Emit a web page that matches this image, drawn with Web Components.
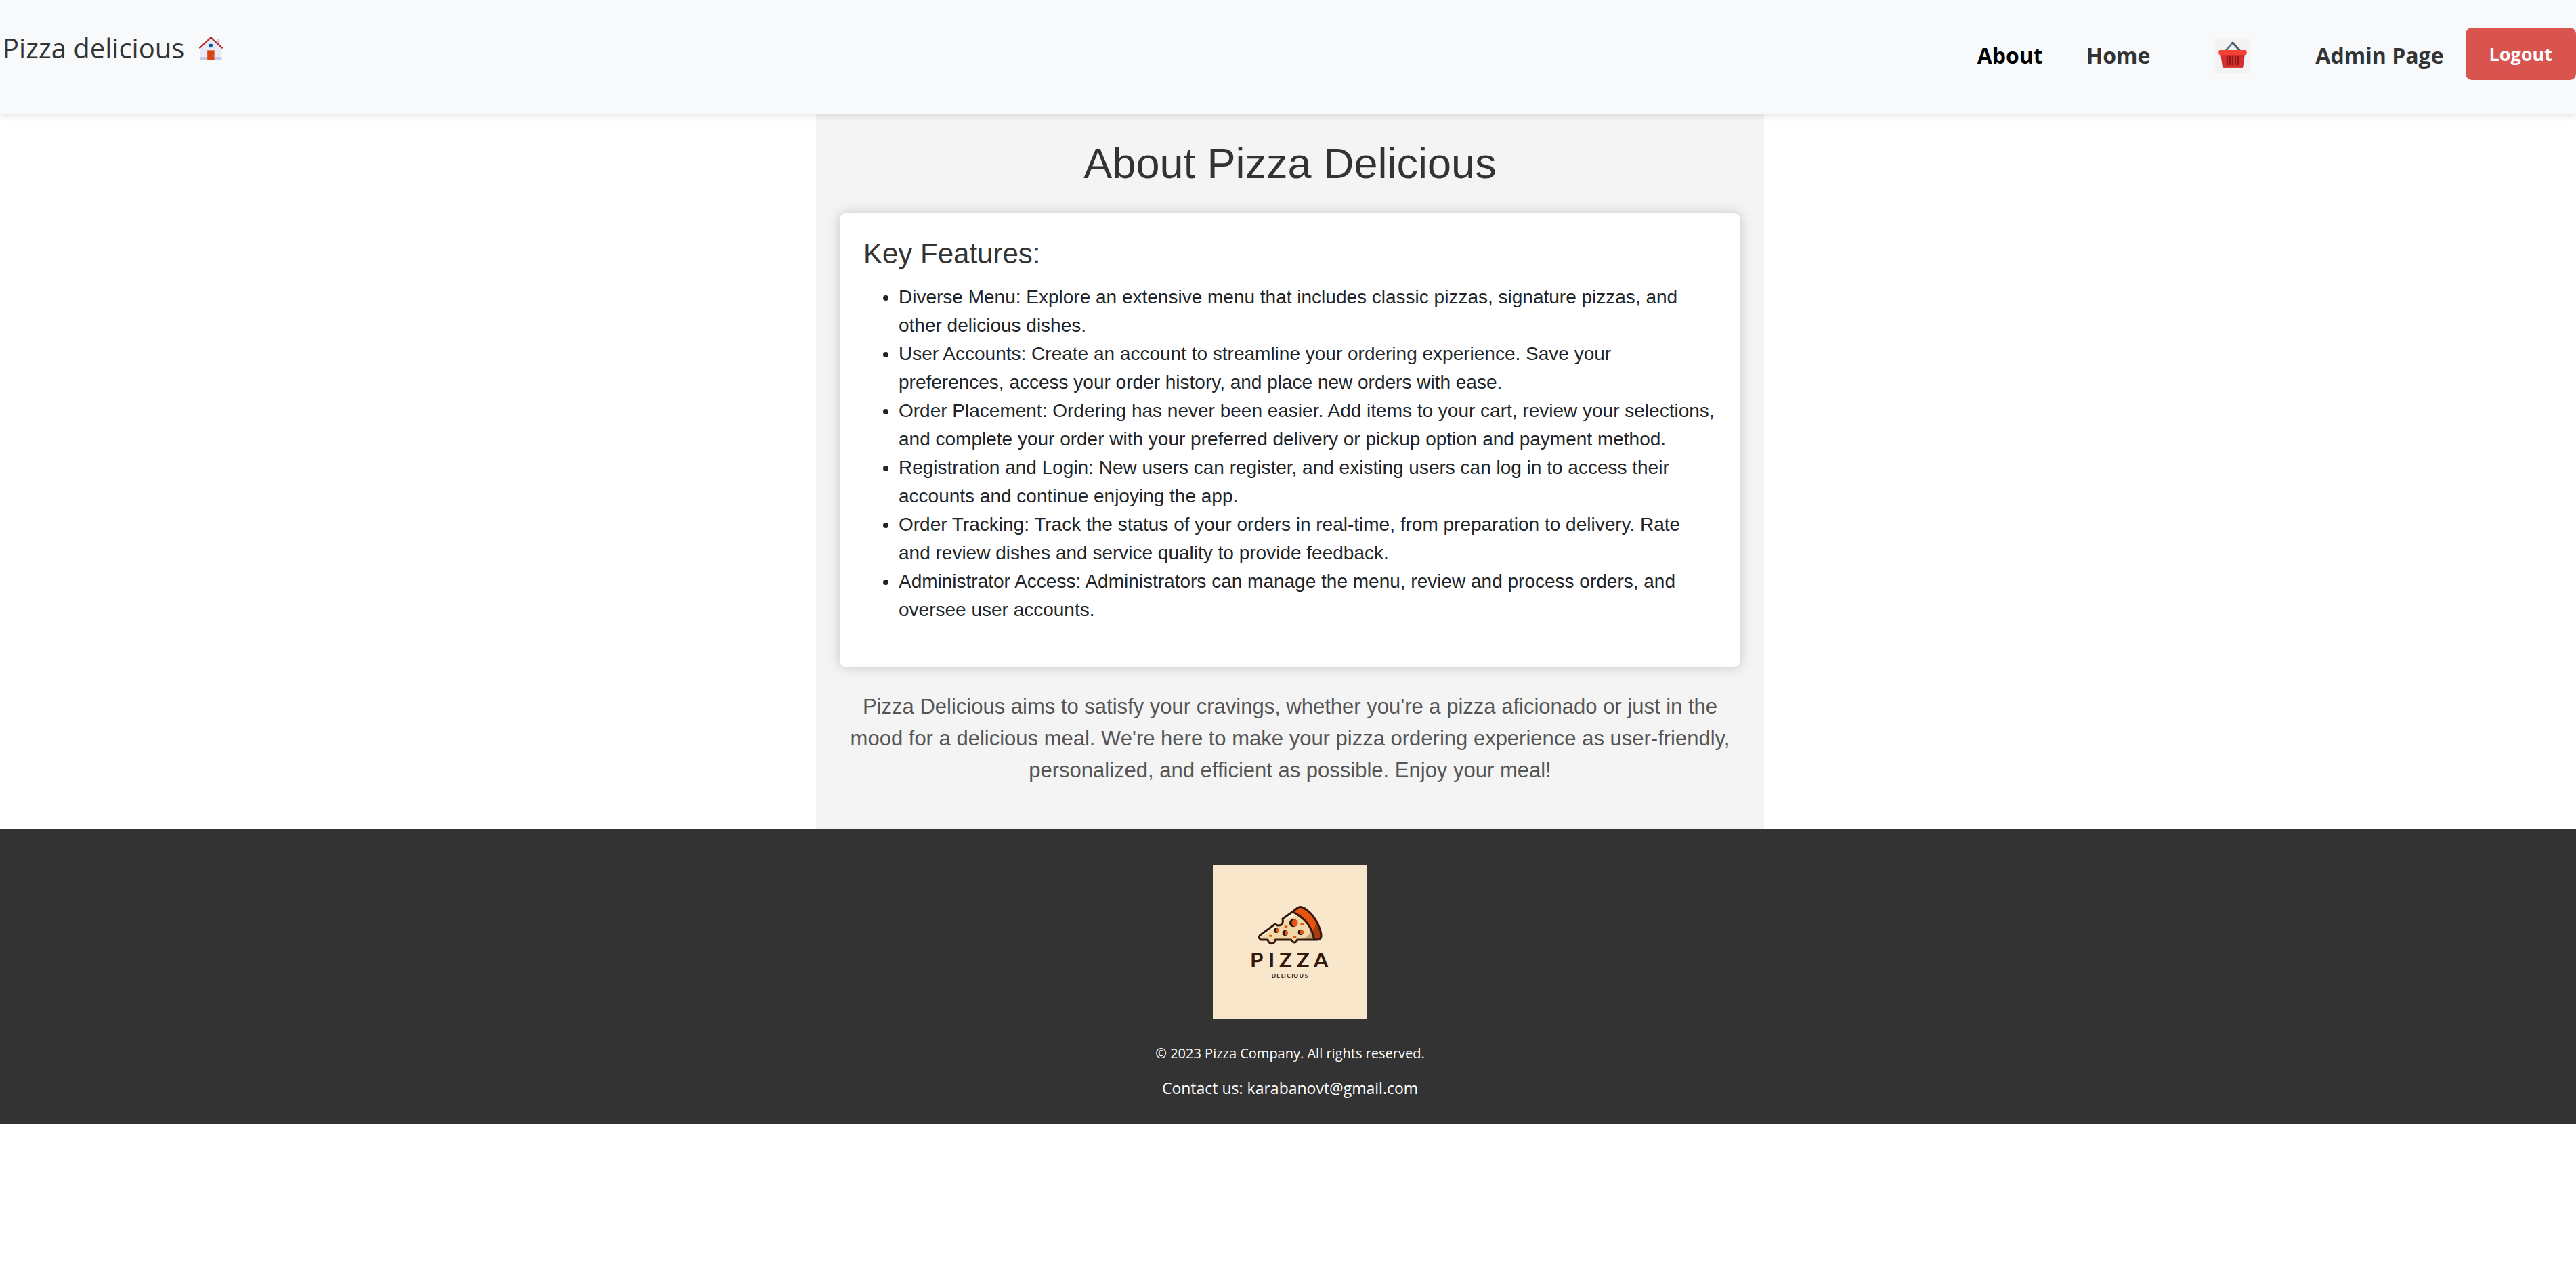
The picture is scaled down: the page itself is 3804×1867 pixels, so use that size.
<!DOCTYPE html>
<html lang="en">
<head>
<meta charset="utf-8">
<title>About Pizza Delicious</title>
<style>
  html { overflow-x: clip; }
  body { margin: 0; background: #fff; color: #212529; font-family: "Open Sans", "Noto Sans", sans-serif; }
</style>
</head>
<body>
<site-header>
  <nav-link href="#about" current>About</nav-link>
  <nav-link href="#home">Home</nav-link>
  <nav-link href="#basket" label="Basket" wide><basket-icon></basket-icon></nav-link>
  <nav-link href="#admin">Admin Page</nav-link>
</site-header>
<about-page>
  <span slot="title">About Pizza Delicious</span>
  <feature-card></feature-card>
  <span slot="summary">Pizza Delicious aims to satisfy your cravings, whether you're a pizza aficionado or just in the mood for a delicious meal. We're here to make your pizza ordering experience as user-friendly, personalized, and efficient as possible. Enjoy your meal!</span>
</about-page>
<site-footer></site-footer>

<script>
const define = (name, html) => customElements.define(name, class extends HTMLElement {
  constructor() {
    super();
    this.attachShadow({ mode: "open" }).innerHTML = html;
  }
});

define("house-icon", `
  <style>:host { display: block; width: 35px; height: 35px; } svg { display: block; width: 100%; height: 100%; }</style>
  <svg viewBox="41 42 105 105" aria-hidden="true">
    <path fill="#c5cae9" d="M120 54h12v32h-12z"/>
    <path fill="#e8eaf6" d="M93 46 45 91v56h96V91z"/>
    <path fill="#c5cae9" d="M45 132h96v15H45z"/>
    <path fill="#bbdefb" d="M83 72h20v21H83z"/>
    <path fill="#01579b" d="M86 75h14v15H86z"/>
    <path fill="#e8a08c" d="M75 102h36v45H75z"/>
    <path fill="#d84315" d="M78 104h30v41H78z"/>
    <path fill="#ef7043" d="M99 123h6v8h-6z"/>
    <path fill="none" stroke="#b71c1c" stroke-width="6" stroke-linecap="round" stroke-linejoin="round" d="M44 92 93 46l50 46"/>
  </svg>`);

define("basket-icon", `
  <style>:host { display: block; width: 52px; height: 52px; } svg { display: block; width: 100%; height: 100%; }</style>
  <svg viewBox="96 48 156 156" aria-hidden="true">
    <path fill="#f3f3f3" d="M96 48h156v156H96z"/>
    <path fill="none" stroke="#607d8b" stroke-width="9" d="M143 106 174 69"/>
    <path fill="none" stroke="#455a64" stroke-width="9" stroke-linecap="round" d="M174 69l32 36"/>
    <path fill="#d32f2f" d="M120 118h108l-8 59q-1 6-7 6h-78q-5 0-6-6z"/>
    <path fill="#e57373" d="M130 179h88v4h-88z"/>
    <rect x="112" y="102" width="124" height="21" rx="6" fill="#f44336"/>
    <path stroke="#8c1616" stroke-width="6" d="M150 128v40M162 128v40M174 128v40M186 128v40M198 128v40"/>
  </svg>`);

define("pizza-logo", `
  <style>
    :host { display: block; width: 228px; height: 228px; }
    svg { display: block; width: 100%; height: 100%; }
    text { font-family: Lato, sans-serif; font-weight: 700; fill: #35170c; }
  </style>
  <svg viewBox="33 51 684 684" role="img" aria-label="Pizza Delicious logo">
    <path fill="#f8e7ca" d="M33 51h684v684H33z"/>
    <path fill="#f3d7a6" d="M386 260 342 291Q348 319 325 321 314 321 310 314L240 366Q234 376 246 384H276Q280 401 294 401 307 401 310 384H380Q385 396 394 396 403 396 407 384H482Q470 308 386 260Z"/>
    <path fill="#fbeed8" d="M386 262 344 291Q346 296 346 302 370 286 405 276ZM310 316 244 365 242 374 322 324Z"/>
    <path fill="#bfa67c" d="M468 336Q464 370 432 381H480Q478 356 468 336Z"/>
    <path fill="#e65413" d="M388 260 410 243Q418 237 430 242 482 274 502 322L515 364Q515 384 496 384H482Q468 300 388 260Z"/>
    <path fill="#a63c10" d="M488 300Q490 330 474 346L482 384H496Q515 384 515 364 507 328 488 300Z"/>
    <g fill="none" stroke="#35170c" stroke-width="9" stroke-linejoin="round" stroke-linecap="round">
      <path d="M386 260 342 291Q348 319 325 321 314 321 310 314L242 364Q232 376 246 384H276Q280 401 294 401 307 401 310 384H380Q385 396 394 396 403 396 407 384H494Q516 384 513 360 504 312 474 276 450 248 428 240 418 236 408 243Z"/>
      <path d="M386 260Q468 300 482 384"/>
    </g>
    <g fill="#160c08"><circle cx="390" cy="310" r="18"/><circle cx="314" cy="343" r="11"/><circle cx="353" cy="354" r="12"/><circle cx="422" cy="351" r="12"/></g>
    <g fill="#e65413">
      <ellipse cx="396" cy="310" rx="14" ry="16"/><ellipse cx="318" cy="343" rx="7" ry="9"/><ellipse cx="358" cy="354" rx="8" ry="10"/><ellipse cx="427" cy="351" rx="8" ry="10"/>
      <rect x="350" y="322" width="14" height="10" rx="4"/><rect x="421" y="311" width="14" height="9" rx="4"/><rect x="282" y="362" width="15" height="9" rx="4"/><rect x="389" y="367" width="14" height="10" rx="4"/>
    </g>
    <text x="198 279 327 404 479" y="508" font-size="94">PIZZA</text>
    <text x="293 316 335 349 361 382 391 416 440" y="552" font-size="25">DELICIOUS</text>
  </svg>`);

customElements.define("nav-link", class extends HTMLElement {
  constructor() {
    super();
    this.attachShadow({ mode: "open" }).innerHTML = `
      <style>
        :host { display: block; font-size: 32px; line-height: 48px; font-weight: 700; color: #333; }
        :host([current]) { color: #000; }
        a { display: block; padding: 4px 32px 0; color: inherit; text-decoration: none; }
        :host([wide]) a { padding: 4px 64px 0; }
      </style>
      <a><slot></slot></a>`;
  }
  connectedCallback() {
    const a = this.shadowRoot.querySelector("a");
    a.href = this.getAttribute("href");
    if (this.hasAttribute("label")) a.setAttribute("aria-label", this.getAttribute("label"));
    if (this.hasAttribute("current")) a.setAttribute("aria-current", "page");
  }
});

define("site-header", `
  <style>
    :host { display: block; position: relative; z-index: 1; background: #f8f9fb; box-shadow: 0 3px 9px rgba(0,0,0,.1); }
    header { display: flex; justify-content: space-between; align-items: flex-start; padding: 41px 0 51px; }
    .brand { display: flex; align-items: center; gap: 22px; padding-left: 4px; color: #333; text-decoration: none; font-size: 40px; line-height: 60px; font-weight: 400; }
    nav { display: flex; align-items: center; }
    button { font: 700 27px/39px "Open Sans", "Noto Sans", sans-serif; color: #fff; background: #d9534f; border: 0; border-radius: 9px; padding: 19px 35px; }
  </style>
  <header>
    <a class="brand" href="#home"><span>Pizza delicious</span><house-icon></house-icon></a>
    <nav><slot></slot><button type="button">Logout</button></nav>
  </header>`);

define("about-page", `
  <style>
    :host { display: block; padding-left: 6px; font-family: "Liberation Sans", Arial, sans-serif; }
    main { box-sizing: border-box; max-width: 1400px; margin: 0 auto; padding: 35px 35px 64px; background: #f4f4f4; text-align: center; }
    h1 { margin: 0 0 37px; font-size: 63px; line-height: 74px; font-weight: 400; color: #333; }
    p { margin: 35px 0 0; font-size: 31px; line-height: 47px; color: #555; }
  </style>
  <main>
    <h1><slot name="title"></slot></h1>
    <slot></slot>
    <p><slot name="summary"></slot></p>
  </main>`);

define("feature-card", `
  <style>
    :host { display: block; padding: 35px; background: #fff; border-radius: 9px; box-shadow: 0 0 18px rgba(0,0,0,.2); text-align: left; }
    h2 { margin: 0 0 18px; font-size: 42px; line-height: 50px; font-weight: 400; color: #333; }
    ul { margin: 0 0 28px; padding-left: 52px; font-size: 28px; line-height: 42px; }
  </style>
  <h2>Key Features:</h2>
  <ul>
    <li>Diverse Menu: Explore an extensive menu that includes classic pizzas, signature pizzas, and other delicious dishes.</li>
    <li>User Accounts: Create an account to streamline your ordering experience. Save your preferences, access your order history, and place new orders with ease.</li>
    <li>Order Placement: Ordering has never been easier. Add items to your cart, review your selections, and complete your order with your preferred delivery or pickup option and payment method.</li>
    <li>Registration and Login: New users can register, and existing users can log in to access their accounts and continue enjoying the app.</li>
    <li>Order Tracking: Track the status of your orders in real-time, from preparation to delivery. Rate and review dishes and service quality to provide feedback.</li>
    <li>Administrator Access: Administrators can manage the menu, review and process orders, and oversee user accounts.</li>
  </ul>`);

define("site-footer", `
  <style>
    :host { display: block; background: #333; color: #fff; }
    footer { display: flex; flex-direction: column; align-items: center; padding: 52px 0 35px 6px; }
    p { margin: 0; }
    .copy { margin: 35px 0 18px; font-size: 20px; line-height: 31px; }
    .contact { font-size: 23px; line-height: 36px; }
  </style>
  <footer>
    <pizza-logo></pizza-logo>
    <p class="copy">© 2023 Pizza Company. All rights reserved.</p>
    <p class="contact">Contact us: karabanovt@gmail.com</p>
  </footer>`);
</script>
</body>
</html>
